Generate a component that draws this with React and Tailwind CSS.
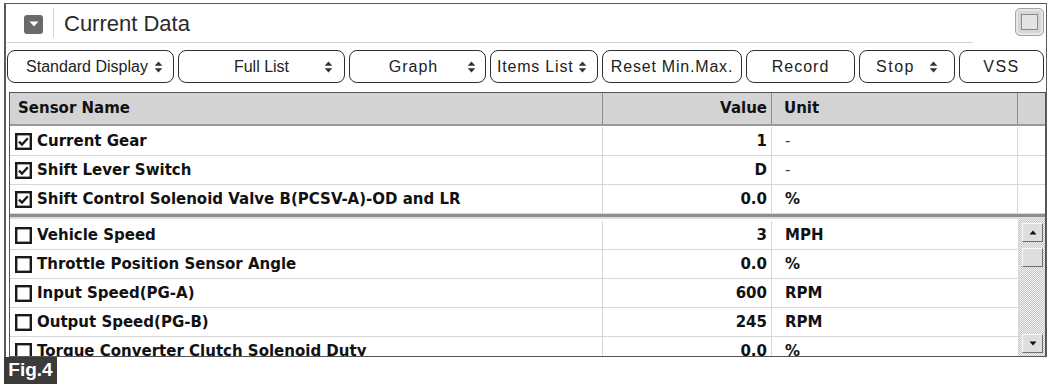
import React from "react";

const SANS = "font-['Liberation_Sans',Arial,sans-serif]";
const BOLD = "font-['DejaVu_Sans',sans-serif] font-bold";

function Spin() {
  return (
    <svg width="9" height="14" viewBox="0 0 9 14" className="shrink-0">
      <path d="M4.5 1.5 L8.3 5.8 L0.7 5.8 Z" fill="#333" />
      <path d="M0.7 8.2 L8.3 8.2 L4.5 12.5 Z" fill="#333" />
    </svg>
  );
}

function Check({ checked }) {
  return (
    <svg width="17" height="17" viewBox="0 0 17 17" className="shrink-0">
      <rect x="1.2" y="1.2" width="14.6" height="14.6" fill="white" stroke="#1a1a1a" strokeWidth="2.4" />
      {checked && (
        <path d="M4 8.6 L7 11.6 L12.8 5.2" fill="none" stroke="#1a1a1a" strokeWidth="2.3" />
      )}
    </svg>
  );
}

function Btn({ className, children }) {
  return (
    <div
      className={
        "h-[33px] shrink-0 flex items-center rounded-[8px] border-[1.5px] border-[#2e2e2e] bg-white text-[16px] text-[#222] " +
        SANS +
        " " +
        className
      }
    >
      {children}
    </div>
  );
}

function Row({ name, value, unit, checked, extra }) {
  return (
    <>
      <div className="h-[29px] border-b border-r border-[#d6d6d6] flex items-center pl-[5px] gap-[5px] overflow-hidden whitespace-nowrap">
        <Check checked={checked} />
        <span>{name}</span>
      </div>
      <div className="h-[29px] border-b border-r border-[#d6d6d6] flex items-center justify-end pr-[4px]">
        {value}
      </div>
      <div className={"h-[29px] border-b border-[#d6d6d6] flex items-center pl-[13px] " + (extra ? "border-r" : "")}>
        {unit === "-" ? <span className="font-normal text-[#444]">-</span> : unit}
      </div>
      {extra && <div className="h-[29px] border-b border-[#d6d6d6]" />}
    </>
  );
}

function ScrollBtn({ up }) {
  return (
    <div className="ml-[3px] w-[21px] h-[19px] bg-[#dedede] border-t border-l border-[#f8f8f8] border-r-[1.5px] border-b-[1.5px] border-r-[#6e6e6e] border-b-[#6e6e6e] flex items-center justify-center shrink-0">
      <svg width="8" height="5" viewBox="0 0 8 5">
        {up ? <path d="M4 0.5 L7.5 4.5 L0.5 4.5 Z" fill="#111" /> : <path d="M0.5 0.5 L7.5 0.5 L4 4.5 Z" fill="#111" />}
      </svg>
    </div>
  );
}

const upper = [
  { name: "Current Gear", value: "1", unit: "-", checked: true },
  { name: "Shift Lever Switch", value: "D", unit: "-", checked: true },
  { name: "Shift Control Solenoid Valve B(PCSV-A)-OD and LR", value: "0.0", unit: "%", checked: true },
];

const lower = [
  { name: "Vehicle Speed", value: "3", unit: "MPH" },
  { name: "Throttle Position Sensor Angle", value: "0.0", unit: "%" },
  { name: "Input Speed(PG-A)", value: "600", unit: "RPM" },
  { name: "Output Speed(PG-B)", value: "245", unit: "RPM" },
  { name: "Torque Converter Clutch Solenoid Duty", value: "0.0", unit: "%" },
];

export default function App() {
  return (
    <div className="w-[1050px] h-[387px] bg-white overflow-hidden">
      <div className="ml-[4px] mt-[3px] w-[1043px] h-[354px] border-l-2 border-t border-r border-[#5a5a5a] flex flex-col">
        {/* title */}
        <div className="h-[39px] flex shrink-0">
          <div className="ml-[1px] w-[966px] h-[39px] border-b border-[#d4d4d4] flex items-center">
            <div className="ml-[17px] w-[19px] h-[19px] rounded-[3px] bg-[#6a6a6a] flex items-center justify-center mt-[2px]">
              <svg width="10" height="6" viewBox="0 0 10 6">
                <path d="M0.5 0.5 L9.5 0.5 L5 5.5 Z" fill="white" />
              </svg>
            </div>
            <div className="ml-[10px] w-px h-[30px] bg-[#d8d8d8]" />
            <span className={"ml-[10px] text-[22px] text-[#2a2a2a] " + SANS}>Current Data</span>
          </div>
          <div className="ml-auto mr-[2px] mt-[4px] w-[29px] h-[28px] rounded-[5px] bg-[#d6d6d6] border border-[#a4a4a4] flex items-center justify-center shadow-[inset_0_0_0_2px_#e6e6e6]">
            <div className="w-[17px] h-[16px] border border-[#8a8a8a] bg-[#e4e4e4]" />
          </div>
        </div>

        {/* toolbar */}
        <div className="mt-[7px] pl-[1px] flex gap-[4px] shrink-0">
          <Btn className="w-[167px] justify-center gap-[6px] pl-[8px]">
            <span>Standard Display</span>
            <Spin />
          </Btn>
          <Btn className="w-[167px] pl-[20px] pr-[11px]">
            <span className="flex-1 text-center">Full List</span>
            <Spin />
          </Btn>
          <Btn className="w-[137px] pl-[10px] pr-[9px]">
            <span className="flex-1 text-center tracking-[1px]">Graph</span>
            <Spin />
          </Btn>
          <Btn className="w-[108px] pl-[6px] gap-[5px]">
            <span className="tracking-[0.8px]">Items List</span>
            <Spin />
          </Btn>
          <Btn className="w-[140px] justify-center">
            <span className="tracking-[0.8px]">Reset Min.Max.</span>
          </Btn>
          <Btn className="w-[109px] justify-center">
            <span className="tracking-[1px]">Record</span>
          </Btn>
          <Btn className="w-[96px] justify-center gap-[14px]">
            <span className="tracking-[1.5px]">Stop</span>
            <Spin />
          </Btn>
          <Btn className="w-[85px] justify-center">
            <span className="tracking-[1.5px]">VSS</span>
          </Btn>
        </div>

        {/* table */}
        <div className={"mt-[9px] ml-[3px] w-[1037px] h-[265px] border border-[#555] flex flex-col text-[15px] text-[#111] " + BOLD}>
          <div className="grid grid-cols-[593px_169px_246px_1fr] h-[33px] bg-[#d3d3d3] border-b-2 border-[#9a9a9a] shrink-0">
            <div className="border-r border-[#8c8c8c] flex items-center pl-[8px]">Sensor Name</div>
            <div className="border-r border-[#8c8c8c] flex items-center justify-end pr-[4px]">Value</div>
            <div className="border-r border-[#8c8c8c] flex items-center pl-[12px]">Unit</div>
            <div />
          </div>
          <div className="grid grid-cols-[593px_169px_246px_1fr] shrink-0 pt-[1px]">
            {upper.map((r) => (
              <Row key={r.name} {...r} extra />
            ))}
          </div>
          <div className="h-[5px] border-t-[3px] border-[#8e8e8e] bg-[#dcdcdc] shrink-0" />
          <div className="flex h-[137px] overflow-hidden">
            <div className="w-[1008px] grid grid-cols-[593px_169px_246px] content-start pt-[2px]">
              {lower.map((r) => (
                <Row key={r.name} {...r} />
              ))}
            </div>
            <div className="flex-1 border-l border-[#d6d6d6] flex flex-col bg-[image:repeating-conic-gradient(#c4c4c4_0%_25%,#f4f4f4_0%_50%)] bg-[length:2px_2px] pt-[4px] pb-[3px]">
              <ScrollBtn up />
              <div className="ml-[3px] mt-[6px] w-[21px] h-[19px] bg-[#dedede] border-t border-l border-[#f8f8f8] border-r-[1.5px] border-b-[1.5px] border-r-[#6e6e6e] border-b-[#6e6e6e]" />
              <div className="flex-1" />
              <ScrollBtn />
            </div>
          </div>
        </div>
      </div>
      <div className={"ml-[4px] w-[53px] h-[27px] bg-[#3b3b3b] flex items-center justify-center text-white font-bold text-[19px] " + SANS}>
        Fig.4
      </div>
    </div>
  );
}
